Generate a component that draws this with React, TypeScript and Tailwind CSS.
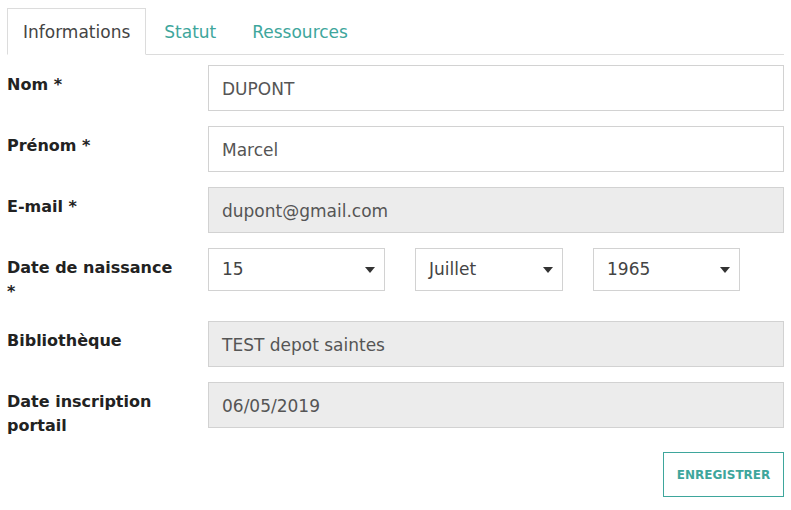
import { useState } from 'react'

const font = { fontFamily: '"DejaVu Sans", "Open Sans", sans-serif' }

function Caret() {
  return (
    <svg width="10" height="6" viewBox="0 0 10 6" className="shrink-0">
      <path d="M0 0h10L5 6z" fill="#333" />
    </svg>
  )
}

function Row({ label, children }: { label: React.ReactNode; children: React.ReactNode }) {
  return (
    <div className="flex items-start">
      <label className="w-[201px] shrink-0 pt-[8px] pb-[2px] pr-[26px] text-[16px] font-bold leading-6 text-[#222]">
        {label}
      </label>
      <div className="flex-1">{children}</div>
    </div>
  )
}

function TextInput({ value, disabled }: { value: string; disabled?: boolean }) {
  return (
    <div
      className={
        'flex h-[46px] items-center border border-[#d2d2d2] px-[13px] pt-[3px] text-[17px] text-[#555] ' +
        (disabled ? 'bg-[#ececec]' : 'bg-white')
      }
    >
      {value}
    </div>
  )
}

function Select({ value, width }: { value: string; width: string }) {
  return (
    <div
      className={
        'flex h-[43px] items-center justify-between border border-[#d2d2d2] bg-white pl-[13px] pr-[9px] text-[17px] text-[#444] ' +
        width
      }
    >
      <span className="pt-[1px]">{value}</span>
      <Caret />
    </div>
  )
}

export default function App() {
  const [tab] = useState('Informations')
  const tabs = ['Informations', 'Statut', 'Ressources']

  return (
    <div className="min-h-[510px] w-[791px] bg-white pt-2 pl-[7px] pr-[7px]" style={font}>
      {/* Tabs */}
      <div className="flex border-b border-[#dcdcdc]">
        {tabs.map((t) =>
          t === tab ? (
            <div
              key={t}
              className="-mb-px flex h-[47px] items-center border border-b-white border-[#dcdcdc] bg-white px-[15px] pt-[3px] text-[17px] text-[#444]"
            >
              {t}
            </div>
          ) : (
            <div key={t} className="flex h-[46px] items-center px-[18px] pt-[3px] text-[17px] text-[#3ea69c]">
              {t}
            </div>
          )
        )}
      </div>

      {/* Form */}
      <div className="mt-[10px] flex flex-col gap-[15px]">
        <Row label="Nom *">
          <TextInput value="DUPONT" />
        </Row>
        <Row label="Prénom *">
          <TextInput value="Marcel" />
        </Row>
        <Row label="E-mail *">
          <TextInput value="dupont@gmail.com" disabled />
        </Row>
        <Row label="Date de naissance *">
          <div className="flex gap-[30px]">
            <Select value="15" width="w-[177px]" />
            <Select value="Juillet" width="w-[148px]" />
            <Select value="1965" width="w-[147px]" />
          </div>
        </Row>
        <Row label="Bibliothèque">
          <TextInput value="TEST depot saintes" disabled />
        </Row>
        <Row label="Date inscription portail">
          <TextInput value="06/05/2019" disabled />
        </Row>
      </div>

      <div className="mt-[12px] flex justify-end">
        <button className="h-[45px] w-[121px] border border-solid border-[#3ea69c] bg-white text-[12px] font-bold text-[#3ea69c]">
          ENREGISTRER
        </button>
      </div>
    </div>
  )
}
